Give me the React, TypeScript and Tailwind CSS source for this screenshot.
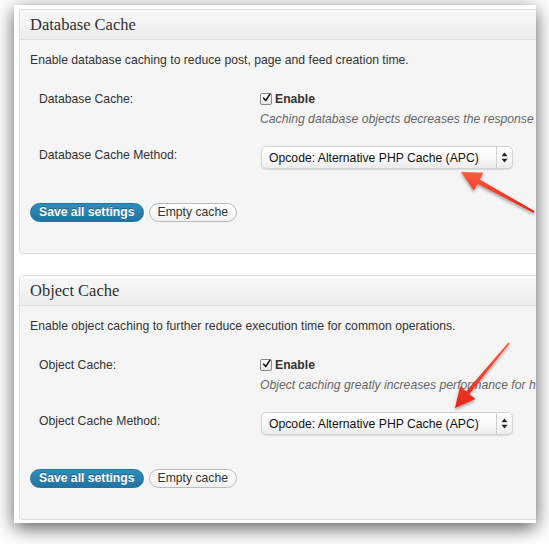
import React from "react";

type Pt = [number, number];

// red callout arrow: tapered shaft + triangular head
function arrowPoints(tail: Pt, tip: Pt, headLen: number, headW: number, shaftTail: number, shaftHead: number) {
  const dx = tip[0] - tail[0];
  const dy = tip[1] - tail[1];
  const len = Math.hypot(dx, dy);
  const ux = dx / len;
  const uy = dy / len;
  const nx = -uy;
  const ny = ux;
  const bx = tip[0] - ux * headLen;
  const by = tip[1] - uy * headLen;
  const pts: Pt[] = [
    [tail[0] + (nx * shaftTail) / 2, tail[1] + (ny * shaftTail) / 2],
    [bx + (nx * shaftHead) / 2, by + (ny * shaftHead) / 2],
    [bx + (nx * headW) / 2, by + (ny * headW) / 2],
    tip,
    [bx - (nx * headW) / 2, by - (ny * headW) / 2],
    [bx - (nx * shaftHead) / 2, by - (ny * shaftHead) / 2],
    [tail[0] - (nx * shaftTail) / 2, tail[1] - (ny * shaftTail) / 2],
  ];
  return pts.map((p) => p.join(",")).join(" ");
}

function Checkbox() {
  return (
    <span className="inline-flex h-[12px] w-[12px] shrink-0 items-center justify-center rounded-[2px] border border-[#8a8a8a] bg-gradient-to-b from-white to-[#e6e6e6]">
      <svg width="12" height="12" viewBox="0 0 12 12" className="-mt-[2px] ml-[1px]">
        <path d="M2.2 6.2 L5 9.3 L10.6 0.8" fill="none" stroke="#111" strokeWidth="2" strokeLinejoin="round" strokeLinecap="round" />
      </svg>
    </span>
  );
}

function Select() {
  return (
    <div className="flex h-[23px] w-[252px] shrink-0 items-stretch rounded-[5px] border border-[#d4d4d4] bg-gradient-to-b from-white via-[#fafafa] to-[#ececec] shadow-[0_1px_1px_rgba(0,0,0,0.12)]">
      <div className="flex flex-1 items-center pl-[7px] text-[12.2px] text-[#111]">Opcode: Alternative PHP Cache (APC)</div>
      <div className="flex w-[16px] items-center justify-center border-l border-[#d0d0d0]">
        <svg width="7" height="11" viewBox="0 0 7 11">
          <path d="M3.5 0.5 L6.5 4.3 L0.5 4.3 Z" fill="#222" />
          <path d="M3.5 10.5 L6.5 6.7 L0.5 6.7 Z" fill="#222" />
        </svg>
      </div>
    </div>
  );
}

function Panel({ title, intro, label, hint, methodLabel }: { title: string; intro: string; label: string; hint: string; methodLabel: string }) {
  return (
    <div className="w-[600px] rounded-[3px] border border-[#dfdfdf] bg-[#f5f5f5]">
      <div className="flex h-[30px] items-center border-b border-[#dfdfdf] bg-gradient-to-b from-[#f9f9f9] to-[#ececec] pl-[10px] pt-[1px] text-[16.5px] text-[#2f2f2f] [font-family:'Liberation_Serif',serif]">
        {title}
      </div>
      <div className="pl-[10px] pt-[11px] pb-[31px] text-[12.2px] leading-[18px] text-[#333]">
        <p>{intro}</p>
        <div className="mt-[21px] flex">
          <div className="w-[230px] shrink-0 pl-[9px]">{label}</div>
          <div>
            <div className="flex items-center gap-[3px] font-bold">
              <Checkbox />
              <span>Enable</span>
            </div>
            <div className="mt-[2px] whitespace-nowrap italic text-[#666]">{hint}</div>
          </div>
        </div>
        <div className="mt-[18px] flex">
          <div className="w-[231px] shrink-0 pl-[9px]">{methodLabel}</div>
          <Select />
        </div>
        <div className="mt-[34px] flex gap-[5px]">
          <button className="h-[19px] rounded-full border border-[#21759b] bg-gradient-to-b from-[#2f8dbd] to-[#2273a0] px-[8px] text-[12.2px] font-bold leading-[17px] text-white [text-shadow:0_-1px_0_rgba(0,0,0,0.3)]">
            Save all settings
          </button>
          <button className="h-[19px] rounded-full border border-[#bbb] bg-gradient-to-b from-white to-[#f2f2f2] px-[8px] text-[12.2px] leading-[17px] text-[#333]">
            Empty cache
          </button>
        </div>
      </div>
    </div>
  );
}

export default function App() {
  return (
    <div className="relative h-[544px] w-[549px] overflow-hidden bg-white [font-family:'Liberation_Sans',Arial,sans-serif]">
      <div className="ml-[14px] mt-[5px] h-[518px] w-[522px] overflow-hidden bg-white shadow-[0_5px_18px_rgba(0,0,0,0.65)]">
        <div className="flex flex-col gap-[21px] pl-[5px] pt-[4px]">
          <Panel
            title="Database Cache"
            intro="Enable database caching to reduce post, page and feed creation time."
            label="Database Cache:"
            hint="Caching database objects decreases the response time of your site."
            methodLabel="Database Cache Method:"
          />
          <Panel
            title="Object Cache"
            intro="Enable object caching to further reduce execution time for common operations."
            label="Object Cache:"
            hint="Object caching greatly increases performance for highly dynamic sites."
            methodLabel="Object Cache Method:"
          />
        </div>
      </div>
      <svg className="pointer-events-none absolute left-0 top-0" width="549" height="544" viewBox="0 0 549 544">
        <defs>
          <filter id="sh" x="-20%" y="-20%" width="140%" height="140%">
            <feDropShadow dx="0" dy="2" stdDeviation="1.5" floodColor="#000" floodOpacity="0.35" />
          </filter>
          <linearGradient id="rd" x1="0" y1="0" x2="0" y2="1">
            <stop offset="0" stopColor="#ff5a3c" />
            <stop offset="1" stopColor="#e8261a" />
          </linearGradient>
        </defs>
        <polygon points={arrowPoints([534, 212], [461, 172], 20, 20, 2, 5)} fill="url(#rd)" filter="url(#sh)" />
        <polygon points={arrowPoints([509, 343], [455, 408], 20, 20, 1.5, 4)} fill="url(#rd)" filter="url(#sh)" />
      </svg>
    </div>
  );
}
